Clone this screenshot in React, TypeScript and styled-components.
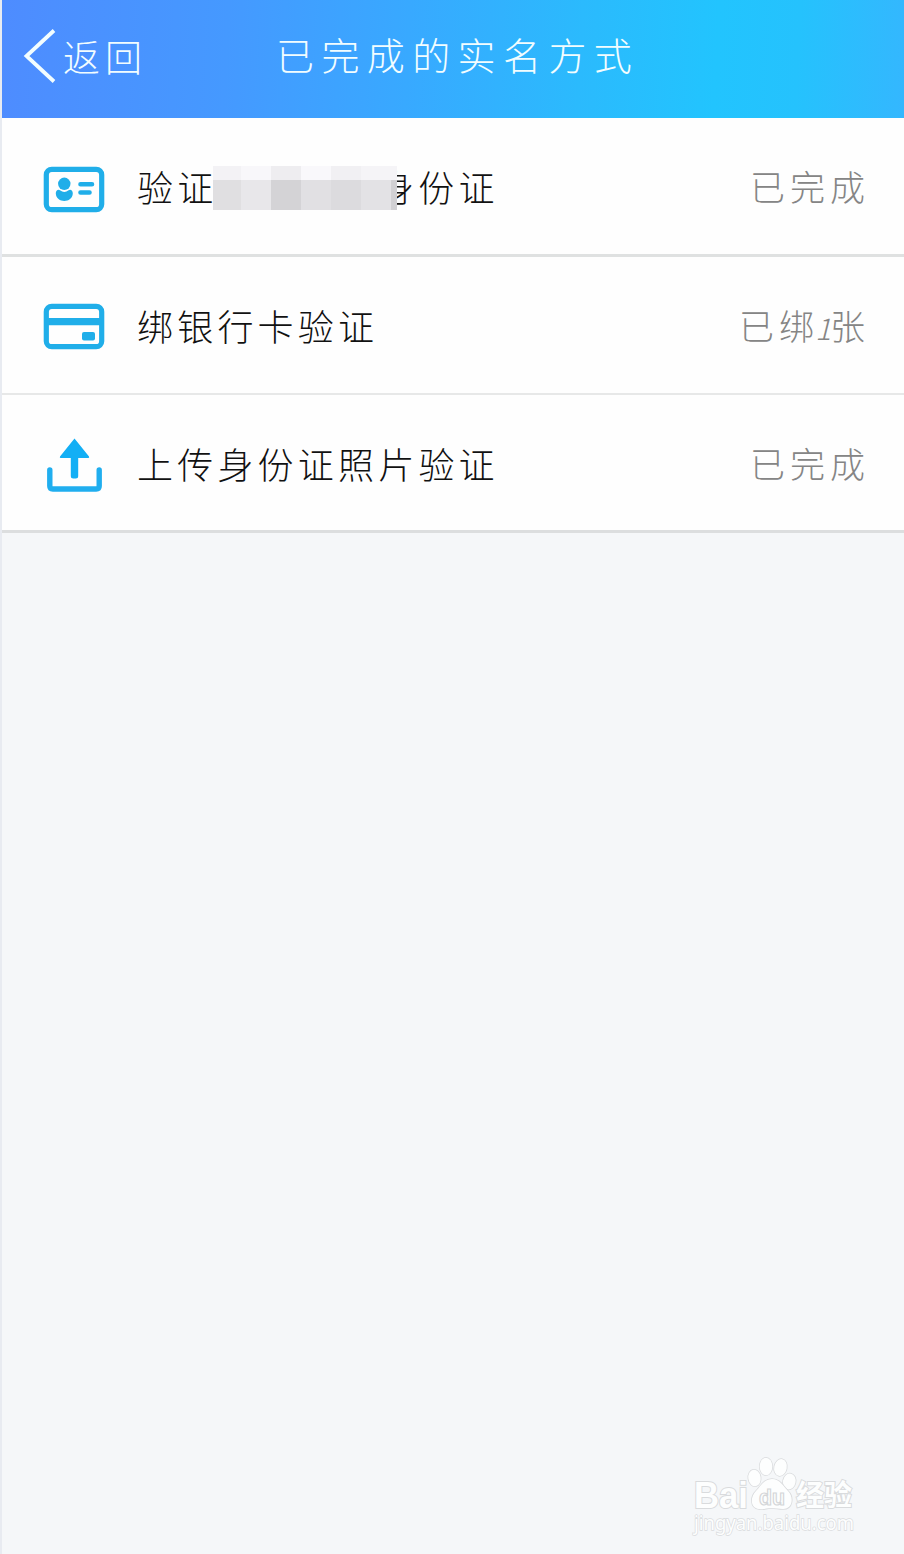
import React from "react";
import styled, { createGlobalStyle } from "styled-components";

const GlobalStyle = createGlobalStyle`
  * { box-sizing: border-box; }
  body {
    margin: 0;
    background: #f5f7f9;
    font-family: "Noto Sans CJK SC", "Liberation Sans", sans-serif;
    font-weight: 300;
  }
`;

const Page = styled.div`
  position: relative;
  display: flex;
  flex-direction: column;
  width: 904px;
  height: 1554px;
  border-left: 2px solid #e8ebf1;
  background: #f5f7f9;
  overflow: hidden;
`;

const Header = styled.header`
  display: grid;
  grid-template-columns: 274px 1fr;
  align-items: center;
  height: 118px;
  padding-bottom: 6px;
  color: #f2fdff;
  background: linear-gradient(93deg, #4e8cff 0%, #4599ff 25%, #38a9ff 45%, #2bbafd 64%, #22c4fe 79%, #25c2fd 88%, #34b7fe 100%);
`;

const BackButton = styled.button`
  display: flex;
  align-items: center;
  gap: 6px;
  padding: 0 0 0 21px;
  border: 0;
  background: none;
  color: inherit;
  font: inherit;
  font-size: 37px;
  line-height: 54px;
  letter-spacing: 5px;
`;

const Title = styled.h1`
  margin: 0;
  padding-bottom: 5px;
  font-size: 38px;
  font-weight: 300;
  line-height: 54px;
  letter-spacing: 7.4px;
`;

const List = styled.ul`
  margin: 0;
  padding: 0;
  list-style: none;
`;

const Row = styled.li<{ $line: string; $thick: number; $height: number }>`
  display: flex;
  align-items: center;
  height: ${(p) => p.$height}px;
  padding: 0 34px 0 41px;
  background: #fefefe;
  border-bottom: ${(p) => p.$thick}px solid ${(p) => p.$line};
`;

const IconSlot = styled.span<{ $drop?: number }>`
  display: flex;
  flex: none;
  width: 94px;
  padding-top: ${(p) => p.$drop ?? 4}px;
`;

const Label = styled.span`
  display: flex;
  align-items: center;
  flex: 1;
  color: #111;
  font-size: 36px;
  line-height: 48px;
  letter-spacing: 4.2px;
  white-space: nowrap;
`;

const Value = styled.span`
  color: #858585;
  font-size: 35px;
  line-height: 48px;
  letter-spacing: 5px;
  white-space: nowrap;
`;

const Digit = styled.span`
  display: inline-block;
  margin-left: -4px;
  font-size: 30px;
  font-style: italic;
  line-height: 36px;
  letter-spacing: -1px;
`;

const Mosaic = styled.span`
  position: relative;
  display: grid;
  grid-template-columns: 28px 30px 30px 30px 30px 30px 6px;
  grid-template-rows: 14px 30px;
  margin: 3px -19px 0 -4.4px;
`;

const Tile = styled.span<{ $tone: string }>`
  background: ${(p) => p.$tone};
`;

const Watermark = styled.svg`
  position: absolute;
  right: 44px;
  bottom: 14px;
`;

const blue = "#20aee9";

const tiles = [
  "#f3f2f5", "#f8f7fa", "#eeedf0", "#f9f8fb", "#f1f0f3", "#f5f4f7", "#f5f4f7",
  "#e0dfe1", "#e8e7ea", "#d4d3d6", "#e1e0e3", "#dcdbde", "#e3e2e5", "#d1d0d3",
];

const IdIcon = () => (
  <svg width="64" height="50" viewBox="0 0 64 50" fill="none">
    <rect x="3.3" y="4.3" width="55.4" height="40.4" rx="5.5" stroke={blue} strokeWidth="5.2" />
    <circle cx="21.3" cy="18.8" r="6.2" fill={blue} />
    <path d="M12.8 28.5C12.6 25 15.5 23.8 17 25.2Q21.3 28.8 25.6 25.2C27.1 23.8 30 25 29.8 28.5C29.4 38.4 13.2 38.4 12.8 28.5Z" fill={blue} />
    <path d="M37.5 19.2H49M37.5 27.5H46.5" stroke={blue} strokeWidth="4.6" strokeLinecap="round" />
  </svg>
);

const CardIcon = () => (
  <svg width="64" height="50" viewBox="0 0 64 50" fill="none">
    <rect x="3.3" y="4.3" width="55.4" height="40.4" rx="5.5" stroke={blue} strokeWidth="5.2" />
    <path d="M3 19.6H59" stroke={blue} strokeWidth="7.4" />
    <rect x="39" y="30" width="13" height="8.5" rx="2" fill={blue} />
  </svg>
);

const UploadIcon = () => (
  <svg width="64" height="58" viewBox="0 0 64 58" fill="none">
    <path d="M6.8 34V50Q6.8 53 9.8 53H53.2Q56.2 53 56.2 50V34" stroke="#20aeef" strokeWidth="5.4" strokeLinecap="round" />
    <path d="M31.5 2.5L46 20.5Q46.8 22 45 22H35.2V40Q35.2 42.5 32.7 42.5H30.3Q27.8 42.5 27.8 40V22H18Q16.2 22 17 20.5Z" fill="#13aff5" />
  </svg>
);

const Logo = () => (
  <Watermark width="170" height="92" viewBox="0 0 170 92">
    <g fill="#fdfefe" stroke="#d9dbdd" strokeWidth="1.5" paintOrder="stroke">
      <ellipse cx="64.5" cy="30" rx="6.2" ry="8.3" transform="rotate(-8 64.5 30)" />
      <ellipse cx="76" cy="18.5" rx="6.3" ry="8.7" />
      <ellipse cx="90.5" cy="19.5" rx="6.3" ry="8.5" transform="rotate(12 90.5 19.5)" />
      <ellipse cx="99.3" cy="33.5" rx="6.3" ry="8" transform="rotate(12 99.3 33.5)" />
      <path d="M82 31C90 31 93 38 98 43C104 49 103 61 93 61C88 61 86 60 81 60C76 60 74 62 69 61C60 60 60 49 66 43C71 38 74 31 82 31Z" />
      <g strokeWidth="2">
        <text x="4" y="59.5" fontFamily="Liberation Sans" fontWeight="700" fontSize="36" textLength="54" lengthAdjust="spacingAndGlyphs">Bai</text>
        <text x="106" y="58" fontFamily="Noto Sans CJK SC, sans-serif" fontWeight="700" fontSize="29" textLength="56" lengthAdjust="spacingAndGlyphs">经验</text>
        <text x="4" y="82" fontFamily="Noto Sans, sans-serif" fontWeight="400" fontSize="19" strokeWidth="1.4" textLength="160" lengthAdjust="spacingAndGlyphs">jingyan.baidu.com</text>
      </g>
    </g>
    <text x="69" y="57" fontFamily="Liberation Sans" fontWeight="700" fontSize="22" fill="#fdfefe" stroke="#d4d6d8" strokeWidth="1.2" textLength="26" lengthAdjust="spacingAndGlyphs">du</text>
  </Watermark>
);

export default function App() {
  return (
    <>
      <GlobalStyle />
      <Page>
        <Header>
          <BackButton>
            <svg width="34" height="58" viewBox="0 0 34 58" fill="none">
              <path d="M31 3.5L3.5 29L31 54.5" stroke="currentColor" strokeWidth="3.8" />
            </svg>
            返回
          </BackButton>
          <Title>已完成的实名方式</Title>
        </Header>
        <List>
          <Row $height={139} $thick={3} $line="#dfe1e1">
            <IconSlot $drop={7}><IdIcon /></IconSlot>
            <Label>
              验证
              <Mosaic>
                {tiles.map((tone, i) => <Tile key={i} $tone={tone} />)}
              </Mosaic>
              身份证
            </Label>
            <Value>已完成</Value>
          </Row>
          <Row $height={138} $thick={2} $line="#e7e8e8">
            <IconSlot><CardIcon /></IconSlot>
            <Label>绑银行卡验证</Label>
            <Value>已绑<Digit>1</Digit>张</Value>
          </Row>
          <Row $height={138} $thick={3} $line="#dcdedf">
            <IconSlot><UploadIcon /></IconSlot>
            <Label>上传身份证照片验证</Label>
            <Value>已完成</Value>
          </Row>
        </List>
        <Logo />
      </Page>
    </>
  );
}
